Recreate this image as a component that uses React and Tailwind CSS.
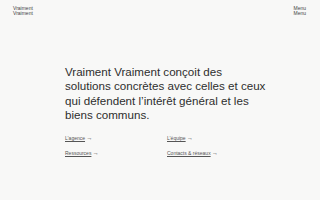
export default function App() {
  const links = ["L’agence", "L’équipe", "Ressources", "Contacts & réseaux"];
  return (
    <div className="w-[320px] h-[200px] bg-[#f8f8f7] text-[#333] flex flex-col overflow-hidden" style={{ fontFamily: '"Liberation Sans", Arial, sans-serif' }}>
      <header className="flex justify-between px-[13px] pt-[6px]">
        <div className="text-[5px] leading-[4.5px] text-[#444]">
          <div>Vraiment</div>
          <div>Vraiment</div>
        </div>
        <div className="text-[5px] leading-[4.5px] text-[#444] mr-[1px]">
          <div>Menu</div>
          <div>Menu</div>
        </div>
      </header>
      <main className="pl-[65px] pt-[50px]">
        <p className="text-[11.6px] leading-[14.3px] text-[#2e2e2e] whitespace-nowrap">
          Vraiment Vraiment conçoit des<br />
          solutions concrètes avec celles et ceux<br />
          qui défendent l’intérêt général et les<br />
          biens communs.
        </p>
        <div className="grid grid-cols-[102px_auto] gap-y-[10px] mt-[14px] text-[5px] leading-[5px] text-[#555]">
          {links.map((l) => (
            <a key={l} className="whitespace-nowrap">
              <span className="underline">{l}</span> <span className="text-[6px] font-bold text-[#333]">→</span>
            </a>
          ))}
        </div>
      </main>
    </div>
  );
}
